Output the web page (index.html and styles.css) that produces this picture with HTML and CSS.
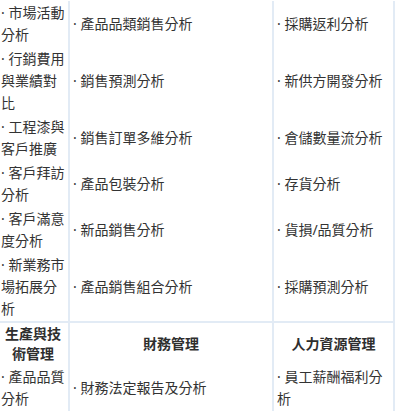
FILE: index.html
```html
<!DOCTYPE html>
<html lang="zh-Hant">
<head>
<meta charset="utf-8">
<link rel="stylesheet" href="styles.css">
</head>
<body>
<table class="grid">
  <tbody>
    <tr><td class="c1">· 市場活動分析</td><td class="c2">· 產品品類銷售分析</td><td class="c3">· 採購返利分析</td></tr>
    <tr><td>· 行銷費用與業績對比</td><td>· 銷售預測分析</td><td>· 新供方開發分析</td></tr>
    <tr><td>· 工程漆與客戶推廣</td><td>· 銷售訂單多維分析</td><td>· 倉儲數量流分析</td></tr>
    <tr><td>· 客戶拜訪分析</td><td>· 產品包裝分析</td><td>· 存貨分析</td></tr>
    <tr><td>· 客戶滿意度分析</td><td>· 新品銷售分析</td><td>· 貨損/品質分析</td></tr>
    <tr><td>· 新業務市場拓展分析</td><td>· 產品銷售組合分析</td><td>· 採購預測分析</td></tr>
    <tr class="head"><th>生產與技術管理</th><th>財務管理</th><th>人力資源管理</th></tr>
    <tr><td>· 產品品質分析</td><td>· 財務法定報告及分析</td><td>· 員工薪酬福利分析</td></tr>
  </tbody>
</table>
</body>
</html>
```

FILE: styles.css
```css
html, body {
  margin: 0;
  padding: 0;
  background: #ffffff;
}
body {
  overflow: hidden;
  font-family: "Noto Sans", "Noto Sans CJK TC", sans-serif;
  font-size: 14px;
  color: #333333;
}
.grid {
  border-collapse: separate;
  border-spacing: 0;
  margin: 1px 0 0 -4px;
  table-layout: fixed;
  width: 399px;
}
.grid td,
.grid th {
  box-sizing: border-box;
  border-right: 2px solid #e2ebf5;
  padding: 1px 3px;
  line-height: 22px;
  vertical-align: middle;
  text-align: left;
  font-weight: normal;
  word-break: break-all;
}
.grid .c1 { width: 74px; }
.grid .c2 { width: 204px; }
.grid .c3 { width: 121px; }
.grid td:first-child,
.grid th:first-child {
  border-left: 2px solid #e2ebf5;
}
.grid .head th {
  border-top: 2px solid #e2ebf5;
  text-align: center;
  font-weight: bold;
  line-height: 20px;
  color: #2e2e2e;
}
```
